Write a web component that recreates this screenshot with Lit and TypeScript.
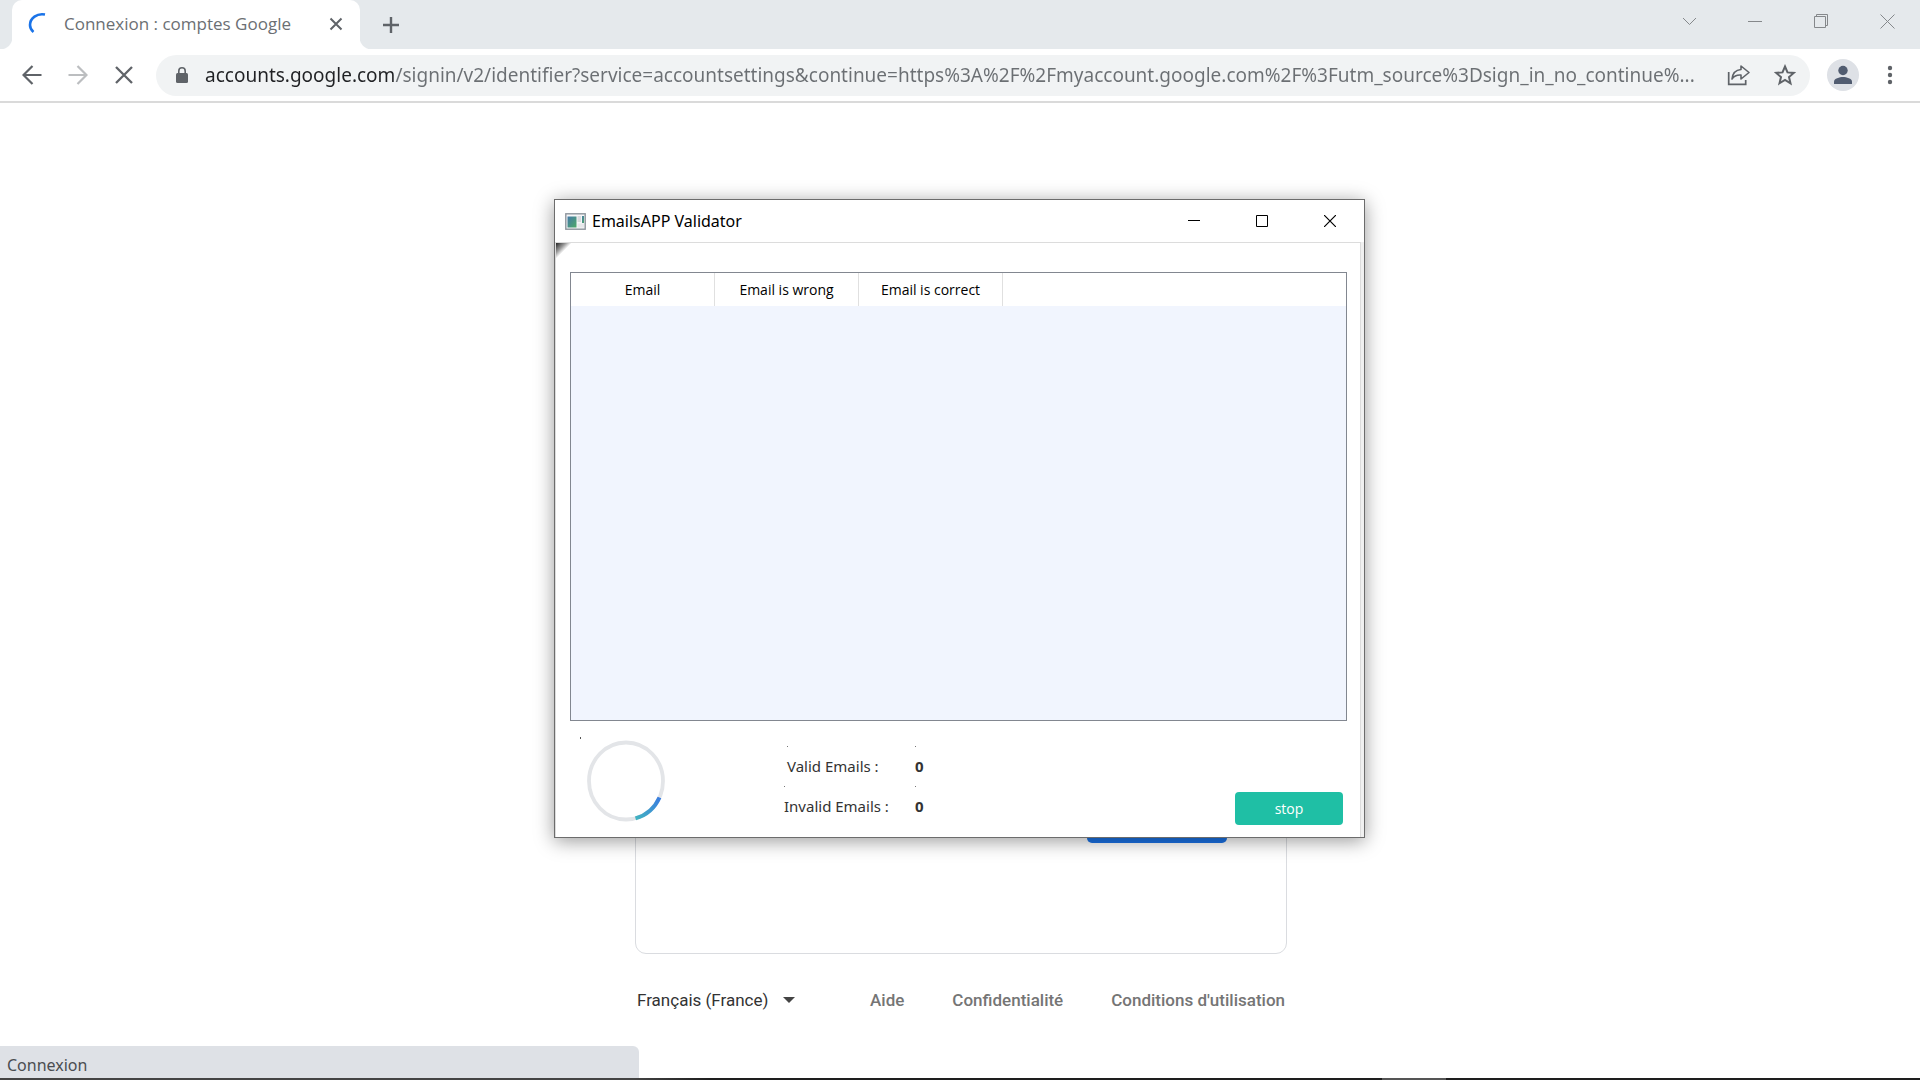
import { LitElement, html, svg, css } from "lit";
import { customElement } from "lit/decorators.js";

const URL_TEXT =
  "accounts.google.com/signin/v2/identifier?service=accountsettings&continue=https%3A%2F%2Fmyaccount.google.com%2F%3Futm_source%3Dsign_in_no_continue%...";

const icon = (w: number, h: number, body: unknown) => html`<svg
  class="icon"
  width=${w}
  height=${h}
  viewBox="0 0 ${w} ${h}"
  fill="none"
  stroke="currentColor"
  aria-hidden="true"
>${body}</svg>`;

@customElement("browser-tabs")
class BrowserTabs extends LitElement {
  static styles = css`
    :host {
      display: flex;
      height: 49px;
      background: #e5e9ec;
      color: #5f6368;
      font-family: "Open Sans", "Noto Sans", sans-serif;
    }
    button {
      border: 0;
      padding: 0;
      background: none;
      color: inherit;
      display: grid;
      place-items: center;
    }
    .icon { display: block; }
    .edge { width: 12px; background: #fff; }
    .edge-left { background: radial-gradient(circle at 0 0, #e5e9ec 12px, #fff 13px) 0 100% / 12px 12px no-repeat; }
    .edge-right { background: radial-gradient(circle at 100% 0, #e5e9ec 12px, #fff 13px) 0 100% / 12px 12px no-repeat; }
    .tab {
      width: 348px;
      box-sizing: border-box;
      display: flex;
      align-items: center;
      padding: 0 14px 2px 16px;
      border-radius: 10px 10px 0 0;
      background: #fff;
    }
    .title {
      flex: 1;
      margin-left: 16px;
      font-size: 17px;
      line-height: 24px;
      white-space: nowrap;
      color: #6b6f73;
    }
    .close { width: 20px; height: 20px; }
    .add { width: 36px; margin-left: 1px; }
    .controls { margin-left: auto; display: flex; color: #85888b; }
    .controls button { width: 66px; height: 42px; }
  `;

  render() {
    return html`
      <span class="edge edge-left"></span>
      <div class="tab">
        ${icon(20, 24, svg`<path d="M17 2.500C9 1 2 6 2 13c0 3 1 5 3.500 7" stroke="#1a73e8" stroke-width="2.600"/>`)}
        <span class="title">Connexion : comptes Google</span>
        <button class="close" aria-label="Close tab">
          ${icon(14, 14, svg`<path d="M1.500 1.500l11 11M12.500 1.500l-11 11" stroke-width="2"/>`)}
        </button>
      </div>
      <span class="edge edge-right"></span>
      <button class="add" aria-label="New tab">
        ${icon(18, 18, svg`<path d="M9 1v16M1 9h16" stroke-width="2.400"/>`)}
      </button>
      <div class="controls">
        <button aria-label="Search tabs">${icon(15, 9, svg`<path d="M1 1l6.500 6.500L14 1"/>`)}</button>
        <button aria-label="Minimize">${icon(14, 14, svg`<path d="M0 7.500h14"/>`)}</button>
        <button aria-label="Restore">${icon(14, 14, svg`<path d="M.5 2.500h11v11h-11zM2.500 2.500v-2h11v11h-2"/>`)}</button>
        <button aria-label="Close">${icon(15, 15, svg`<path d="M.5.5l14 14M14.500.5l-14 14"/>`)}</button>
      </div>
    `;
  }
}

@customElement("browser-toolbar")
class BrowserToolbar extends LitElement {
  static styles = css`
    :host {
      display: flex;
      align-items: center;
      height: 52px;
      padding: 0 7px 0 9px;
      border-bottom: 2px solid #dadada;
      background: #fff;
      color: #5f6368;
    }
    button {
      border: 0;
      padding: 0;
      background: none;
      color: inherit;
      display: grid;
      place-items: center;
      width: 46px;
      height: 40px;
    }
    .icon { display: block; }
    .forward { color: #bcbec0; }
    .box {
      flex: 1;
      height: 41px;
      margin-left: 9px;
      display: flex;
      align-items: center;
      border-radius: 21px;
      padding: 0 2px 0 20px;
      background: #f1f3f4;
    }
    .address {
      flex: 1;
      min-width: 0;
      height: 32px;
      margin-left: 17px;
      padding: 0;
      border: 0;
      outline: 0;
      font: 19px/28px "Noto Sans", "Open Sans", sans-serif;
      color: #6b6f73;
      -webkit-text-fill-color: transparent;
      background: linear-gradient(90deg, #202124 190px, #6b6f73 190px);
      -webkit-background-clip: text;
      background-clip: text;
    }
    .profile { margin-left: 9px; width: 48px; }
  `;

  render() {
    return html`
      <button aria-label="Back">
        ${icon(20, 20, svg`<path d="M19.500 10H2M10.500 1L1.500 10l9 9" stroke-width="2.200"/>`)}
      </button>
      <button class="forward" aria-label="Forward">
        ${icon(20, 20, svg`<path d="M.5 10H18M9.500 1l9 9-9 9" stroke-width="2.200"/>`)}
      </button>
      <button aria-label="Stop loading">
        ${icon(18, 18, svg`<path d="M1 1l16 16M17 1L1 17" stroke-width="2.300"/>`)}
      </button>
      <div class="box">
        ${icon(12, 17, svg`<rect y="6" width="12" height="10" rx="1.500" fill="currentColor" stroke="none"/><path d="M2.800 7V4a3.200 3.200 0 0 1 6.400 0v3" stroke-width="1.600"/>`)}
        <input class="address" type="text" aria-label="Address" .value=${URL_TEXT} />
        <button aria-label="Share">
          ${icon(24, 22, svg`<path d="M1.700 8v12.300h17V16" stroke-width="1.700"/><path d="M14 2l8 6.500-8 6.500v-4c-4-.3-7 1-9 4 .5-5 3-9 9-9.500z" stroke-width="1.600" stroke-linejoin="round"/>`)}
        </button>
        <button aria-label="Bookmark">
          ${icon(22, 22, svg`<path d="M11 2.500l2.500 5.900 6.300.5-4.800 4.200 1.500 6.200L11 16l-5.500 3.300L7 13.100 2.200 8.900l6.300-.5z" stroke-width="2"/>`)}
        </button>
      </div>
      <button class="profile" aria-label="Profile">
        ${icon(32, 32, svg`<circle cx="16" cy="16" r="16" fill="#dee1e6" stroke="none"/><g fill="#515c70" stroke="none"><circle cx="16" cy="11.500" r="4.700"/><path d="M7 25v-2.500c0-3 5.500-4.500 9-4.500s9 1.500 9 4.500V25z"/></g>`)}
      </button>
      <button aria-label="Menu">
        ${icon(6, 20, svg`<g fill="currentColor" stroke="none"><circle cx="3" cy="3" r="2.200"/><circle cx="3" cy="10" r="2.200"/><circle cx="3" cy="17" r="2.200"/></g>`)}
      </button>
    `;
  }
}

@customElement("signin-page")
class SigninPage extends LitElement {
  static styles = css`
    :host {
      flex: 1;
      display: flex;
      flex-direction: column;
      align-items: center;
      justify-content: flex-end;
      padding-left: 2px;
      background: #fff;
      font-family: Roboto, "Noto Sans", sans-serif;
    }
    .card {
      width: 652px;
      max-width: 100%;
      min-height: 624px;
      box-sizing: border-box;
      display: flex;
      flex-direction: column;
      align-items: flex-end;
      justify-content: flex-end;
      padding: 0 59px 110px;
      border: 1px solid #dadce0;
      border-radius: 11px;
    }
    .next {
      width: 140px;
      height: 48px;
      border: 0;
      border-radius: 5px;
      background: #1a73e8;
    }
    .footer {
      width: 652px;
      max-width: 100%;
      box-sizing: border-box;
      display: flex;
      align-items: center;
      justify-content: space-between;
      padding: 34px 2px 66px;
      font-size: 17px;
      line-height: 24px;
    }
    .language { display: flex; align-items: center; color: #444; }
    select {
      appearance: none;
      border: 0;
      padding: 0;
      background: none;
      font: inherit;
      color: #333;
    }
    .caret {
      margin-left: 14px;
      border: 6px solid transparent;
      border-top-color: #444;
      border-bottom: 0;
    }
    .links { display: flex; gap: 48px; }
    a { color: #757575; font-weight: 500; text-decoration: none; }
  `;

  render() {
    return html`
      <section class="card"><button class="next" aria-label="Suivant"></button></section>
      <footer class="footer">
        <label class="language">
          <select aria-label="Langue"><option>Français (France)</option></select>
          <span class="caret"></span>
        </label>
        <nav class="links">
          <a href="#aide">Aide</a>
          <a href="#confidentialite">Confidentialité</a>
          <a href="#conditions">Conditions d'utilisation</a>
        </nav>
      </footer>
    `;
  }
}

@customElement("validator-window")
class ValidatorWindow extends LitElement {
  static styles = css`
    :host {
      box-sizing: border-box;
      display: flex;
      flex-direction: column;
      border: 1px solid #6c6c6c;
      background: #fff;
      box-shadow: 0 3px 18px rgba(0, 0, 0, 0.4);
      font-family: "Noto Sans", "Open Sans", sans-serif;
      color: #000;
    }
    .icon { display: block; }
    .titlebar {
      height: 42px;
      display: flex;
      align-items: center;
      padding-left: 10px;
    }
    .app { margin-left: 6px; font-size: 16px; line-height: 24px; }
    .controls { margin-left: auto; display: flex; }
    .controls button {
      width: 68px;
      height: 42px;
      border: 0;
      padding: 0;
      background: none;
      color: #000;
      display: grid;
      place-items: center;
    }
    .strip { padding-right: 3px; background: #f0f0f0; }
    .body {
      position: relative;
      display: flex;
      flex-direction: column;
      gap: 16px;
      padding: 29px 13px 11px 14px;
      border: solid #dcdcdc;
      border-width: 1px 1px 0 1px;
      background: #fff;
    }
    .corner {
      position: absolute;
      top: 0;
      left: 0;
      width: 16px;
      height: 16px;
      background: linear-gradient(135deg, #222 0%, #999 30%, #fff 50%);
    }
    .results {
      height: 449px;
      box-sizing: border-box;
      border: 1px solid #828790;
      background: #f1f5fe;
    }
    table { width: 100%; border-collapse: collapse; table-layout: fixed; background: #fff; }
    th {
      width: 143px;
      height: 33px;
      padding: 0;
      border-right: 1px solid #e0e0e0;
      font: 400 14px/20px "Open Sans", "Noto Sans", sans-serif;
    }
    th:last-child { width: auto; border: 0; }
    .status { display: flex; align-items: flex-start; }
    .spinner { margin-left: 8px; }
    .counts {
      display: grid;
      grid-template-columns: 131px auto;
      margin: 9px 0 0 118px;
      font-size: 15px;
      line-height: 40px;
      color: #333;
    }
    .counts label,
    .counts output {
      background: linear-gradient(#777, #777) 0 0 / 1px 1px no-repeat;
    }
    .counts label:first-child { margin-left: 3px; }
    output { font-weight: 700; }
    .stop {
      width: 108px;
      height: 33px;
      margin: 55px 4px 0 auto;
      border: 0;
      padding: 0;
      border-radius: 4px;
      background: #1fbfa5;
      color: #fff;
      font: 14px/20px "Open Sans", "Noto Sans", sans-serif;
    }
  `;

  render() {
    return html`
      <header class="titlebar">
        ${icon(21, 17, svg`<defs><linearGradient id="pane" x1="0" y1="0" x2="1" y2="1"><stop offset="0" stop-color="#4478a8"/><stop offset="1" stop-color="#4faa68"/></linearGradient></defs><rect x=".8" y=".8" width="19.400" height="15.400" fill="#f6f7f8" stroke="#8d949c" stroke-width="1.400"/><rect x="2.500" y="3.500" width="9" height="11" fill="url(#pane)" stroke="none"/><rect x="12.500" y="3" width="3.500" height="6" fill="#d8dadd" stroke="none"/><rect x="17" y="3" width="2" height="7" fill="url(#pane)" stroke="none"/><rect x="12.500" y="10.500" width="6.500" height="4" fill="#e6e8ea" stroke="none"/>`)}
        <span class="app">EmailsAPP Validator</span>
        <div class="controls">
          <button aria-label="Minimize">${icon(12, 12, svg`<path d="M0 5.500h12"/>`)}</button>
          <button aria-label="Maximize">${icon(12, 12, svg`<path d="M.5.5h11v11H.5z"/>`)}</button>
          <button aria-label="Close">${icon(12, 12, svg`<path d="M0 0l12 12M12 0L0 12" stroke-width="1.200"/>`)}</button>
        </div>
      </header>
      <div class="strip">
        <div class="body">
          <span class="corner"></span>
          <div class="results">
            <table>
              <thead>
                <tr>
                  <th>Email</th>
                  <th>Email is wrong</th>
                  <th>Email is correct</th>
                  <th></th>
                </tr>
              </thead>
            </table>
          </div>
          <div class="status">
            <svg class="spinner" width="88" height="86" viewBox="0 0 88 86" fill="none" aria-hidden="true">
              <rect x="2" y="0" width="1" height="2" fill="#555" />
              <ellipse cx="48" cy="44" rx="37" ry="38.500" stroke="#e3e5e8" stroke-width="3.800" />
              <path d="M81.500 60.500A37 38.500 0 0 1 57.500 81.400" stroke="url(#arc)" stroke-width="4" />
              <defs>
                <linearGradient id="arc" x1="1" y1="0" x2="0" y2="1">
                  <stop offset="0" stop-color="#3a7de0" />
                  <stop offset="1" stop-color="#42b3c0" />
                </linearGradient>
              </defs>
            </svg>
            <div class="counts">
              <label for="valid">Valid Emails :</label>
              <output id="valid">0</output>
              <label for="invalid">Invalid Emails :</label>
              <output id="invalid">0</output>
            </div>
            <button class="stop">stop</button>
          </div>
        </div>
      </div>
    `;
  }
}

@customElement("app-root")
class AppRoot extends LitElement {
  static styles = css`
    :host {
      position: relative;
      display: flex;
      flex-direction: column;
      min-height: 100vh;
      overflow: hidden;
      background: #fff;
    }
    .window {
      position: absolute;
      top: 199px;
      left: calc(50% - 406px);
      width: 811px;
    }
    .bubble {
      position: absolute;
      left: 0;
      bottom: 2px;
      width: 33.3%;
      height: 32px;
      box-sizing: border-box;
      padding: 7px 7px 0;
      border-radius: 0 6px 0 0;
      background: #dee1e6;
      color: #4a4d51;
      font: 16px/24px "Noto Sans", "Open Sans", sans-serif;
    }
    .taskbar {
      height: 2px;
      background: linear-gradient(90deg, #444 33%, #1e1e1e 37%);
      display: flex;
    }
    .task { margin-left: 72%; width: 64px; background: #555; }
  `;

  render() {
    return html`
      <browser-tabs></browser-tabs>
      <browser-toolbar></browser-toolbar>
      <signin-page></signin-page>
      <div class="taskbar"><span class="task"></span></div>
      <div class="bubble">Connexion</div>
      <validator-window class="window"></validator-window>
    `;
  }
}
